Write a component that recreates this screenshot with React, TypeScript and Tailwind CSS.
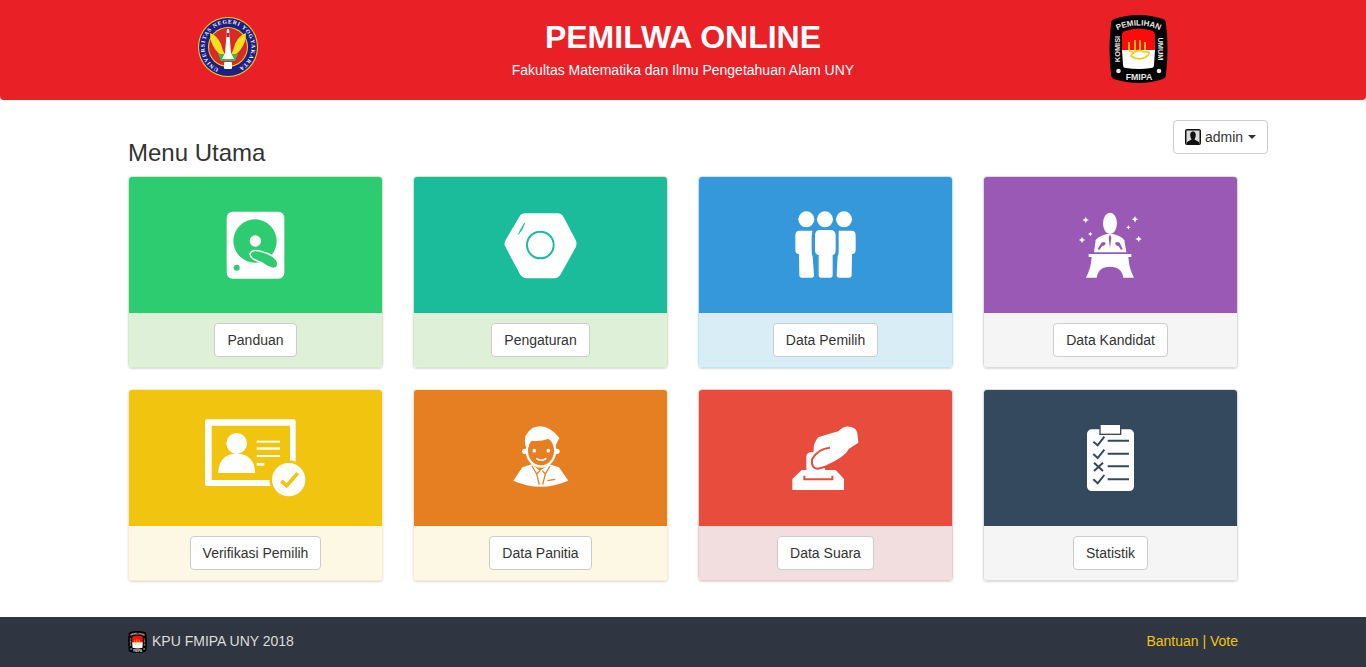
import type { ReactNode } from 'react';

const sans = { fontFamily: '"Liberation Sans", Arial, sans-serif' };

function UnyLogo() {
  return (
    <svg viewBox="0 0 60 60" className="w-[60px] h-[60px]">
      <circle cx="30" cy="30" r="30" fill="#f3d21c" />
      <circle cx="30" cy="30" r="29" fill="#1c1f86" />
      <circle cx="30" cy="30" r="20" fill="#f3d21c" />
      <circle cx="30" cy="30" r="19" fill="#d92a2a" />
      <defs>
        <path id="unyArc" d="M22 52.1 A23.5 23.5 0 1 1 38 52.1" />
      </defs>
      <text fill="#fff" fontSize="5.6" fontWeight="700" style={{ fontFamily: '"Liberation Serif", serif' }}>
        <textPath href="#unyArc" startOffset="1%" textLength="126">
          UNIVERSITAS NEGERI YOGYAKARTA
        </textPath>
      </text>
      <path d="M29 41 C20 38 12 29 12 16 C18 18 21 23 23 27 C24 32 26 36 29 41Z" fill="#f5e11e" />
      <path d="M31 41 C40 38 48 29 48 16 C42 18 39 23 37 27 C36 32 34 36 31 41Z" fill="#f5e11e" />
      <path d="M20 37 L40 37 L37 44 L23 44Z" fill="#3fb54a" />
      <path d="M29 12 L31 12 L33 36 L36 42 L24 42 L27 36Z" fill="#fff" />
      <path d="M28.5 16 L31.5 16 L31.5 20 L28.5 20Z" fill="#c22" />
      <rect x="26" y="45" width="8" height="7" rx="1" fill="#fff" />
    </svg>
  );
}

function KpuLogo({ className }: { className: string }) {
  return (
    <svg viewBox="0 0 59 68" className={className}>
      <path
        d="M5 4 Q30 -4 54 4 Q57 5 57 9 Q60 34 57 59 Q57 63 54 64 Q30 72 5 64 Q2 63 2 59 Q-1 34 2 9 Q2 5 5 4Z"
        fill="#000"
      />
      <defs>
        <path id="kpuTop" d="M5 17 Q30 4 54 17" />
      </defs>
      <g fill="#e8e8e8" fontWeight="700" style={sans}>
        <text fontSize="8">
          <textPath href="#kpuTop" startOffset="50%" textAnchor="middle">
            PEMILIHAN
          </textPath>
        </text>
        <text fontSize="8.8" x="30" y="65" textAnchor="middle">
          FMIPA
        </text>
        <text fontSize="7.4" textAnchor="middle" transform="translate(10.5 34) rotate(-90)">
          KOMISI
        </text>
        <text fontSize="7.4" textAnchor="middle" transform="translate(49 34) rotate(90)">
          UMUM
        </text>
      </g>
      <circle cx="9.5" cy="56" r="2.3" fill="#e8e8e8" />
      <circle cx="50" cy="56" r="2.3" fill="#e8e8e8" />
      <path d="M16 16 Q30 11 44 16 Q46 17 46 20 L46 35 L13 35 L13 20 Q13 17 16 16Z" fill="#f80c0c" />
      <path d="M13 35 L46 35 L45 50 Q45 53 42 53 Q30 55 17 53 Q14 53 14 50Z" fill="#fff" />
      <path
        d="M20 27 V34 Q20 37 24 37 M26 25 V36 M31 25 V36 M36 27 V35 M22 41 Q27 33 35 37 Q44 36 37 42 Q29 46 22 41Z"
        fill="none"
        stroke="#e6d21a"
        strokeWidth="1.7"
      />
    </svg>
  );
}

function HddIcon() {
  return (
    <svg viewBox="27 21 759 408" className="block w-full h-full">
      <rect x="320" y="125" width="173" height="201" rx="18" fill="#fff" />
      <circle cx="405" cy="213" r="65" fill="#2ecc71" />
      <circle cx="406" cy="213" r="17" fill="#fff" />
      <path
        d="M392 252 C400 238 420 245 440 252 C460 260 475 272 470 287 C465 298 450 292 435 282 C420 270 395 270 392 252Z"
        fill="#2ecc71"
        stroke="#fff"
        strokeWidth="9"
        paintOrder="stroke"
      />
      <circle cx="350" cy="293" r="9" fill="#2ecc71" />
    </svg>
  );
}

function NutIcon() {
  return (
    <svg viewBox="-198 -54 759 408" className="block w-full h-full">
      <path
        d="M135 55 L232 55 Q245 55 252 68 L287 135 Q292 146 287 157 L242 238 Q235 250 222 250 L140 250 Q128 250 120 238 L77 157 Q70 146 77 135 L118 65 Q124 55 135 55Z"
        fill="#fff"
      />
      <circle cx="181" cy="150" r="40" fill="#fff" stroke="#1abc9c" strokeWidth="6" />
      <path d="M134 84 L124 100 L115 118 L126 104Z" fill="#1abc9c" stroke="#1abc9c" strokeWidth="2" />
    </svg>
  );
}

function PeopleIcon() {
  return (
    <svg viewBox="-213 -54 759 408" className="block w-full h-full" fill="#fff">
      <circle cx="109" cy="73" r="24" />
      <circle cx="165" cy="73" r="24" />
      <circle cx="222" cy="73" r="24" />
      <path d="M90 107 L127 107 L125 125 L125 168 Q125 180 128 184 L132 240 Q132 248 124 248 L96 248 Q88 248 88 240 L87 178 Q76 176 76 165 L76 120 Q76 107 90 107Z" />
      <path d="M150 105 L182 105 Q197 105 197 122 L197 165 Q197 178 188 180 L188 240 Q188 248 180 248 L154 248 Q146 248 146 240 L146 180 Q135 178 135 165 L135 122 Q135 105 150 105Z" />
      <path d="M206 107 L243 107 Q257 107 257 120 L257 165 Q257 176 246 178 L245 240 Q245 248 237 248 L208 248 Q200 248 200 240 L203 184 Q206 180 206 168 L206 125Z" />
    </svg>
  );
}

function Sparkle({ x, y, r }: { x: number; y: number; r: number }) {
  const q = r * 0.3;
  return (
    <path
      d={`M${x} ${y - r} L${x + q} ${y - q} L${x + r} ${y} L${x + q} ${y + q} L${x} ${y + r} L${x - q} ${y + q} L${x - r} ${y} L${x - q} ${y - q}Z`}
    />
  );
}

function SpeakerIcon() {
  const purple = '#9b59b6';
  return (
    <svg viewBox="-228 -54 759 408" className="block w-full h-full" fill="#fff">
      <ellipse cx="150" cy="85" rx="21" ry="32" />
      <path d="M102 172 L107 136 Q111 126 140 117 L160 117 Q189 126 193 136 L199 172Z" />
      <path d="M150 118 L146 128 L150 160 L154 128Z" fill={purple} />
      <path d="M113 162 L124 143 Q132 138 137 144 Q136 152 126 154 L118 165Z" fill={purple} />
      <path d="M188 162 L179 143 Q171 138 165 144 Q166 152 176 154 L183 165Z" fill={purple} />
      <path d="M86 177 L214 177 L214 186 L205 186 Q207 220 222 248 L190 248 Q185 215 150 215 Q115 215 110 248 L78 248 Q93 220 95 186 L86 186Z" />
      <Sparkle x={77} y={75} r={10} />
      <Sparkle x={225} y={73} r={10} />
      <Sparkle x={205} y={97} r={7} />
      <Sparkle x={236} y={132} r={10} />
      <Sparkle x={66} y={135} r={10} />
      <Sparkle x={91} y={117} r={7} />
    </svg>
  );
}

function IdCardIcon() {
  return (
    <svg viewBox="-198 -45 759 408" className="block w-full h-full" fill="#fff">
      <path
        fillRule="evenodd"
        d="M36 43 L296 43 Q302 43 302 49 L302 237 Q302 243 296 243 L36 243 Q30 243 30 237 L30 49 Q30 43 36 43Z M50 62 L50 225 L285 225 L285 62Z"
      />
      <circle cx="281" cy="224" r="58" fill="#f1c40f" />
      <circle cx="281" cy="224" r="50" />
      <circle cx="125" cy="115" r="31" />
      <path d="M70 204 Q70 150 125 145 Q180 150 180 204Z" />
      <rect x="185" y="107" width="70" height="6" />
      <rect x="185" y="127" width="70" height="7" />
      <rect x="185" y="150" width="70" height="6" />
      <rect x="185" y="174" width="23" height="8" />
      <path d="M259 228 L275 242 L308 205" fill="none" stroke="#f1c40f" strokeWidth="11" />
    </svg>
  );
}

function OfficerIcon() {
  const orange = '#e67e22';
  return (
    <svg viewBox="-228 -60 759 408" className="block w-full h-full" fill="#fff">
      <path d="M70 212 L97 172 L125 163 L150 182 L178 163 L207 172 L235 212 Q150 248 70 212Z" />
      <path
        d="M150 182 L140 192 L148 224 M157 182 L166 192 L158 224 M126 168 L140 192 M180 168 L166 192"
        fill="none"
        stroke={orange}
        strokeWidth="4"
      />
      <path d="M172 212 L196 208" stroke={orange} strokeWidth="4" />
      <circle cx="104" cy="124" r="8" />
      <circle cx="201" cy="124" r="8" />
      <ellipse cx="153" cy="122" rx="46" ry="51" />
      <ellipse cx="153" cy="122" rx="39" ry="44" fill={orange} />
      <path d="M106 108 Q98 72 128 54 Q170 36 208 84 L194 112 Q190 94 176 86 Q150 96 124 92 Q116 100 114 114Z" />
      <circle cx="133" cy="122" r="5.5" />
      <circle cx="175" cy="122" r="5.5" />
      <path d="M139 145 Q154 156 169 145" fill="none" stroke="#fff" strokeWidth="4.5" />
    </svg>
  );
}

function BallotIcon() {
  const red = '#e74c3c';
  return (
    <svg viewBox="-228 -60 759 408" className="block w-full h-full" fill="#fff">
      <path d="M52 240 L52 207 L80 180 L182 180 L207 207 L207 240Z" />
      <path d="M88 197 L88 208 L172 208 L172 197" fill="none" stroke={red} strokeWidth="6" />
      <path d="M94 182 L94 138 Q96 127 108 127 L150 127 L150 185 L94 185Z" />
      <path d="M116 122 Q114 100 130 82 Q160 72 190 64 Q212 40 240 56 Q248 60 250 98 L222 116 Q210 140 155 165 Q130 180 115 172 Q100 150 116 122Z" />
      <path d="M165 113 Q128 116 111 148 Q108 176 128 176 L152 170" fill="none" stroke={red} strokeWidth="6" />
    </svg>
  );
}

function ClipboardIcon() {
  const navy = '#34495e';
  return (
    <svg viewBox="-243 -60 759 408" className="block w-full h-full" fill="#fff">
      <rect x="66" y="58" width="141" height="185" rx="14" />
      <rect x="105" y="43" width="62" height="30" fill="#fff" stroke={navy} strokeWidth="4" />
      <g fill="none" stroke={navy} strokeWidth="6">
        <path d="M85 95 L98 106 L118 80" />
        <path d="M85 132 L98 144 L118 119" />
        <path d="M87 158 L114 183 M114 158 L87 183" />
        <path d="M85 208 L98 220 L118 195" />
        <path d="M128 92 H192 M128 131 H192 M128 169 H192 M128 208 H192" />
      </g>
    </svg>
  );
}

type MenuItem = {
  label: string;
  icon: ReactNode;
  head: string;
  foot: string;
  border: string;
};

const menu: MenuItem[] = [
  { label: 'Panduan', icon: <HddIcon />, head: 'bg-[#2ecc71]', foot: 'bg-[#dff0d8]', border: 'border-[#d6e9c6]' },
  { label: 'Pengaturan', icon: <NutIcon />, head: 'bg-[#1abc9c]', foot: 'bg-[#dff0d8]', border: 'border-[#d6e9c6]' },
  { label: 'Data Pemilih', icon: <PeopleIcon />, head: 'bg-[#3498db]', foot: 'bg-[#d9edf7]', border: 'border-[#bce8f1]' },
  { label: 'Data Kandidat', icon: <SpeakerIcon />, head: 'bg-[#9b59b6]', foot: 'bg-[#f5f5f5]', border: 'border-[#ddd]' },
  { label: 'Verifikasi Pemilih', icon: <IdCardIcon />, head: 'bg-[#f1c40f]', foot: 'bg-[#fcf8e3]', border: 'border-[#faebcc]' },
  { label: 'Data Panitia', icon: <OfficerIcon />, head: 'bg-[#e67e22]', foot: 'bg-[#fcf8e3]', border: 'border-[#faebcc]' },
  { label: 'Data Suara', icon: <BallotIcon />, head: 'bg-[#e74c3c]', foot: 'bg-[#f2dede]', border: 'border-[#ebccd1]' },
  { label: 'Statistik', icon: <ClipboardIcon />, head: 'bg-[#34495e]', foot: 'bg-[#f5f5f5]', border: 'border-[#ddd]' },
];

function MenuCard({ item }: { item: MenuItem }) {
  return (
    <div className={`rounded border overflow-hidden shadow-[0_1px_2px_rgba(0,0,0,0.15)] ${item.border}`}>
      <div className={`h-[136px] ${item.head}`}>{item.icon}</div>
      <div className={`h-[54px] flex items-center justify-center ${item.foot}`}>
        <button className="h-[34px] px-3 rounded bg-white border border-[#ccc] text-sm text-[#333]">
          {item.label}
        </button>
      </div>
    </div>
  );
}

export default function App() {
  return (
    <div className="bg-white text-[#333]" style={sans}>
      <header className="h-[100px] bg-[#ea2027] rounded-b grid grid-cols-3 items-center">
        <div className="flex justify-center pb-[7px]">
          <UnyLogo />
        </div>
        <div className="flex flex-col items-center text-white pb-[1px]">
          <h1 className="text-[32px] leading-[36px] font-bold">PEMILWA ONLINE</h1>
          <p className="text-sm leading-5 mt-[5px]">Fakultas Matematika dan Ilmu Pengetahuan Alam UNY</p>
        </div>
        <div className="flex justify-center pb-[2px]">
          <KpuLogo className="w-[59px] h-[68px]" />
        </div>
      </header>

      <main className="w-[1110px] mx-auto pb-[36px]">
        <div className="h-[76px] pt-[20px] flex items-end justify-between">
          <h2 className="text-2xl leading-[26px] mb-[10px]">Menu Utama</h2>
          <button className="self-start h-[34px] w-[95px] -mr-[30px] rounded border border-[#ccc] bg-white flex items-center justify-center gap-1 text-sm text-[#333]">
            <svg viewBox="0 0 16 16" className="w-4 h-4">
              <rect width="16" height="16" rx="2" fill="#111" />
              <rect x="1.5" y="1.5" width="13" height="13" fill="#ddd" />
              <path d="M8 2.5 C5.5 2.5 5 5 5.3 7 C5.5 8.5 6.5 10 6.5 10.5 L2 13 L2 15 L14 15 L14 13 L9.5 10.5 C9.5 10 10.5 8.5 10.7 7 C11 5 10.5 2.5 8 2.5Z" fill="#111" />
            </svg>
            admin
            <span className="ml-[1px] border-x-4 border-t-4 border-x-transparent border-t-[#333]" />
          </button>
        </div>
        <div className="grid grid-cols-4 gap-x-[30px] gap-y-[21px]">
          {menu.map((item) => (
            <MenuCard key={item.label} item={item} />
          ))}
        </div>
      </main>

      <footer className="h-[50px] bg-[#303641]">
        <div className="w-[1110px] h-full mx-auto pb-[2px] flex items-center justify-between text-sm">
          <div className="flex items-center gap-[5px] text-[#ddd]">
            <KpuLogo className="w-[19px] h-[22px] mt-[2px]" />
            KPU FMIPA UNY 2018
          </div>
          <div className="text-[#f1c40f]">Bantuan | Vote</div>
        </div>
      </footer>
    </div>
  );
}
